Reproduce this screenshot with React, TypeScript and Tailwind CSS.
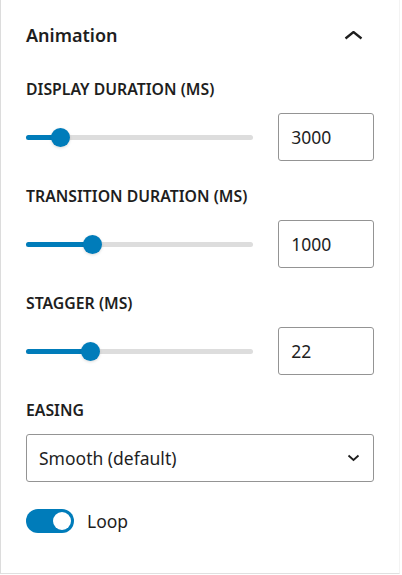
import React from "react"

const font = { fontFamily: '"Noto Sans", "Open Sans", sans-serif' }

function RangeRow({ fill, value }: { fill: string; value: string }) {
  return (
    <div className="flex items-center gap-[25px] h-[48px]">
      <div className="relative w-[228px] h-[20px] flex items-center">
        <div className="w-full h-[5px] rounded-full bg-[#dddddd]" />
        <div className={`absolute left-0 h-[5px] rounded-full bg-[#007cba] ${fill}`} />
        <div
          className={`absolute w-[19px] h-[19px] -ml-[9.5px] rounded-full bg-[#007cba] shadow-[0_1px_3px_rgba(0,0,0,0.15)] ${
            fill === "w-[34px]" ? "left-[34px]" : fill === "w-[66px]" ? "left-[66px]" : "left-[64px]"
          }`}
        />
      </div>
      <div className="w-[96px] h-[48px] border border-[#949494] rounded-[3px] flex items-center pl-[12px] text-[17.5px] text-[#1e1e1e]">
        {value}
      </div>
    </div>
  )
}

function Label({ children, className = "" }: { children: React.ReactNode; className?: string }) {
  return (
    <div className={`text-[15.8px] leading-[20px] font-semibold uppercase text-[#1e1e1e] ${className}`}>{children}</div>
  )
}

export default function App() {
  return (
    <div className="w-[402px] h-[575px] bg-white" style={font}>
      <div className="w-[400px] border-l border-r border-l-[#dcdcdc] border-r-[#f3f3f3] border-b border-b-[#e0e0e0] pb-[39px]">
        <div className="h-[70px] flex items-center justify-between pl-[25px] pr-[36px]">
          <h2 className="text-[18px] font-semibold text-[#1e1e1e]">Animation</h2>
          <svg width="19" height="9" viewBox="0 0 19 9" fill="none">
            <polyline points="1.5,7.5 9.5,1 17.5,7.5" stroke="#1e1e1e" strokeWidth="2.3" />
          </svg>
        </div>

        <div className="px-[25px]">
          <Label className="mt-[9px] mb-[14px]">Display duration (ms)</Label>
          <RangeRow fill="w-[34px]" value="3000" />

          <Label className="mt-[25px] mb-[14px]">Transition duration (ms)</Label>
          <RangeRow fill="w-[66px]" value="1000" />

          <Label className="mt-[25px] mb-[14px]">Stagger (ms)</Label>
          <RangeRow fill="w-[64px]" value="22" />

          <Label className="mt-[25px] mb-[14px]">Easing</Label>
          <div className="h-[48px] border border-[#949494] rounded-[3px] flex items-center justify-between pl-[12px] pr-[13px] text-[17.5px] text-[#1e1e1e]">
            <span>Smooth (default)</span>
            <svg width="13" height="8" viewBox="0 0 13 8" fill="none">
              <polyline points="1.5,1.5 6.5,6 11.5,1.5" stroke="#1e1e1e" strokeWidth="1.8" />
            </svg>
          </div>

          <div className="mt-[26px] flex items-center gap-[13px]">
            <div className="relative w-[48px] h-[24px] rounded-full bg-[#007cba]">
              <div className="absolute right-[3px] top-[3px] w-[18px] h-[18px] rounded-full bg-white" />
            </div>
            <span className="text-[17.5px] text-[#1e1e1e]">Loop</span>
          </div>
        </div>
      </div>
    </div>
  )
}
